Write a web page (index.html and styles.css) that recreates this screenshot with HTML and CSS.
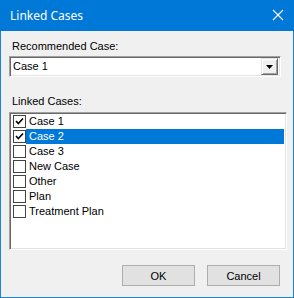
FILE: index.html
```html
<!DOCTYPE html>
<html lang="en">
<head>
  <meta charset="UTF-8">
  <title>Linked Cases</title>
  <link rel="stylesheet" href="styles.css">
</head>
<body>
  <div class="window">
    <div class="titlebar">
      <span class="title">Linked Cases</span>
      <svg class="close" width="12" height="12" viewBox="0 0 12 12">
        <path d="M1 1 L11 11 M11 1 L1 11" stroke="#fff" stroke-width="1.1" fill="none"/>
      </svg>
    </div>

    <div class="content">
      <div class="label">Recommended Case:</div>
      <div class="combo">
        <span class="combo-text">Case 1</span>
        <div class="combo-btn">
          <svg width="7" height="4" viewBox="0 0 7 4"><path d="M0 0 H7 L3.5 4 Z" fill="#000"/></svg>
        </div>
      </div>

      <div class="label label-list">Linked Cases:</div>
      <div class="listbox">
        <div class="item"><span class="check checked"><svg width="11" height="11" viewBox="0 0 11 11"><path d="M2 5 L4.3 7.5 L9 2.5" stroke="#000" stroke-width="1.6" fill="none"/></svg></span><span class="item-text">Case 1</span></div>
        <div class="item selected"><span class="check checked"><svg width="11" height="11" viewBox="0 0 11 11"><path d="M2 5 L4.3 7.5 L9 2.5" stroke="#000" stroke-width="1.6" fill="none"/></svg></span><span class="item-text">Case 2</span></div>
        <div class="item"><span class="check"></span><span class="item-text">Case 3</span></div>
        <div class="item"><span class="check"></span><span class="item-text">New Case</span></div>
        <div class="item"><span class="check"></span><span class="item-text">Other</span></div>
        <div class="item"><span class="check"></span><span class="item-text">Plan</span></div>
        <div class="item"><span class="check"></span><span class="item-text">Treatment Plan</span></div>
      </div>

      <div class="buttons">
        <button class="btn">OK</button>
        <button class="btn">Cancel</button>
      </div>
    </div>
  </div>
</body>
</html>
```

FILE: styles.css
```css
body {
  margin: 0;
  padding: 0;
  font-family: 'Liberation Sans', Arial, sans-serif;
  font-size: 11px;
  color: #000;
  background: #fff;
}

.window {
  width: 294px;
  height: 298px;
  box-sizing: border-box;
  border: 1px solid #1883d7;
  border-top: none;
  background: #f0f0f0;
  display: flex;
  flex-direction: column;
}

.titlebar {
  height: 31px;
  margin: 0 -1px;
  background: #0078d7;
  color: #fff;
  display: flex;
  align-items: center;
  justify-content: space-between;
  padding: 0 10px 0 10px;
  box-sizing: border-box;
}

.title {
  font-family: 'Noto Sans', 'Open Sans', sans-serif;
  font-size: 12px;
  margin-top: -1px;
}

.close {
  margin-top: -1px;
}

.content {
  flex: 1;
  padding: 9px 6px 0 8px;
  display: flex;
  flex-direction: column;
}

.label {
  line-height: 13px;
  height: 13px;
  padding-left: 3px;
}

.combo {
  margin-top: 3px;
  width: 272px;
  height: 21px;
  box-sizing: border-box;
  background: #fff;
  border-top: 1px solid #a0a0a0;
  border-left: 1px solid #a0a0a0;
  border-right: 1px solid #fff;
  border-bottom: 1px solid #fff;
  box-shadow: inset 1px 1px 0 #696969, inset -1px -1px 0 #e3e3e3;
  display: flex;
  align-items: center;
  justify-content: space-between;
  padding: 0 2px 0 3px;
}

.combo-text {
  line-height: 13px;
}

.combo-btn {
  width: 17px;
  height: 17px;
  box-sizing: border-box;
  background: #f0f0f0;
  border-top: 1px solid #e3e3e3;
  border-left: 1px solid #e3e3e3;
  border-right: 1px solid #696969;
  border-bottom: 1px solid #696969;
  box-shadow: inset 1px 1px 0 #fff, inset -1px -1px 0 #a0a0a0;
  display: flex;
  align-items: center;
  justify-content: center;
}

.label-list {
  margin-top: 18px;
}

.listbox {
  margin-top: 4px;
  width: 278px;
  height: 138px;
  box-sizing: border-box;
  background: #fff;
  border-top: 1px solid #a0a0a0;
  border-left: 1px solid #a0a0a0;
  border-right: 1px solid #fff;
  border-bottom: 1px solid #fff;
  box-shadow: inset 1px 1px 0 #696969, inset -1px -1px 0 #e3e3e3;
  padding: 1px 2px 0 2px;
}

.item {
  height: 15px;
  display: flex;
  align-items: center;
  line-height: 15px;
}

.check {
  width: 13px;
  height: 13px;
  box-sizing: border-box;
  border: 1px solid #444;
  background: #fff;
  margin-left: 1px;
  display: flex;
  align-items: center;
  justify-content: center;
}

.item-text {
  flex: 1;
  height: 15px;
  padding-left: 3px;
}

.selected .item-text {
  background: #0078d7;
  color: #fff;
}

.buttons {
  margin-top: 15px;
  display: flex;
  justify-content: flex-end;
  gap: 12px;
  padding-right: 7px;
}

.btn {
  width: 73px;
  height: 21px;
  background: #e1e1e1;
  border: 1px solid #adadad;
  font-family: 'Liberation Sans', Arial, sans-serif;
  font-size: 11px;
  color: #000;
  padding: 0;
}
```
